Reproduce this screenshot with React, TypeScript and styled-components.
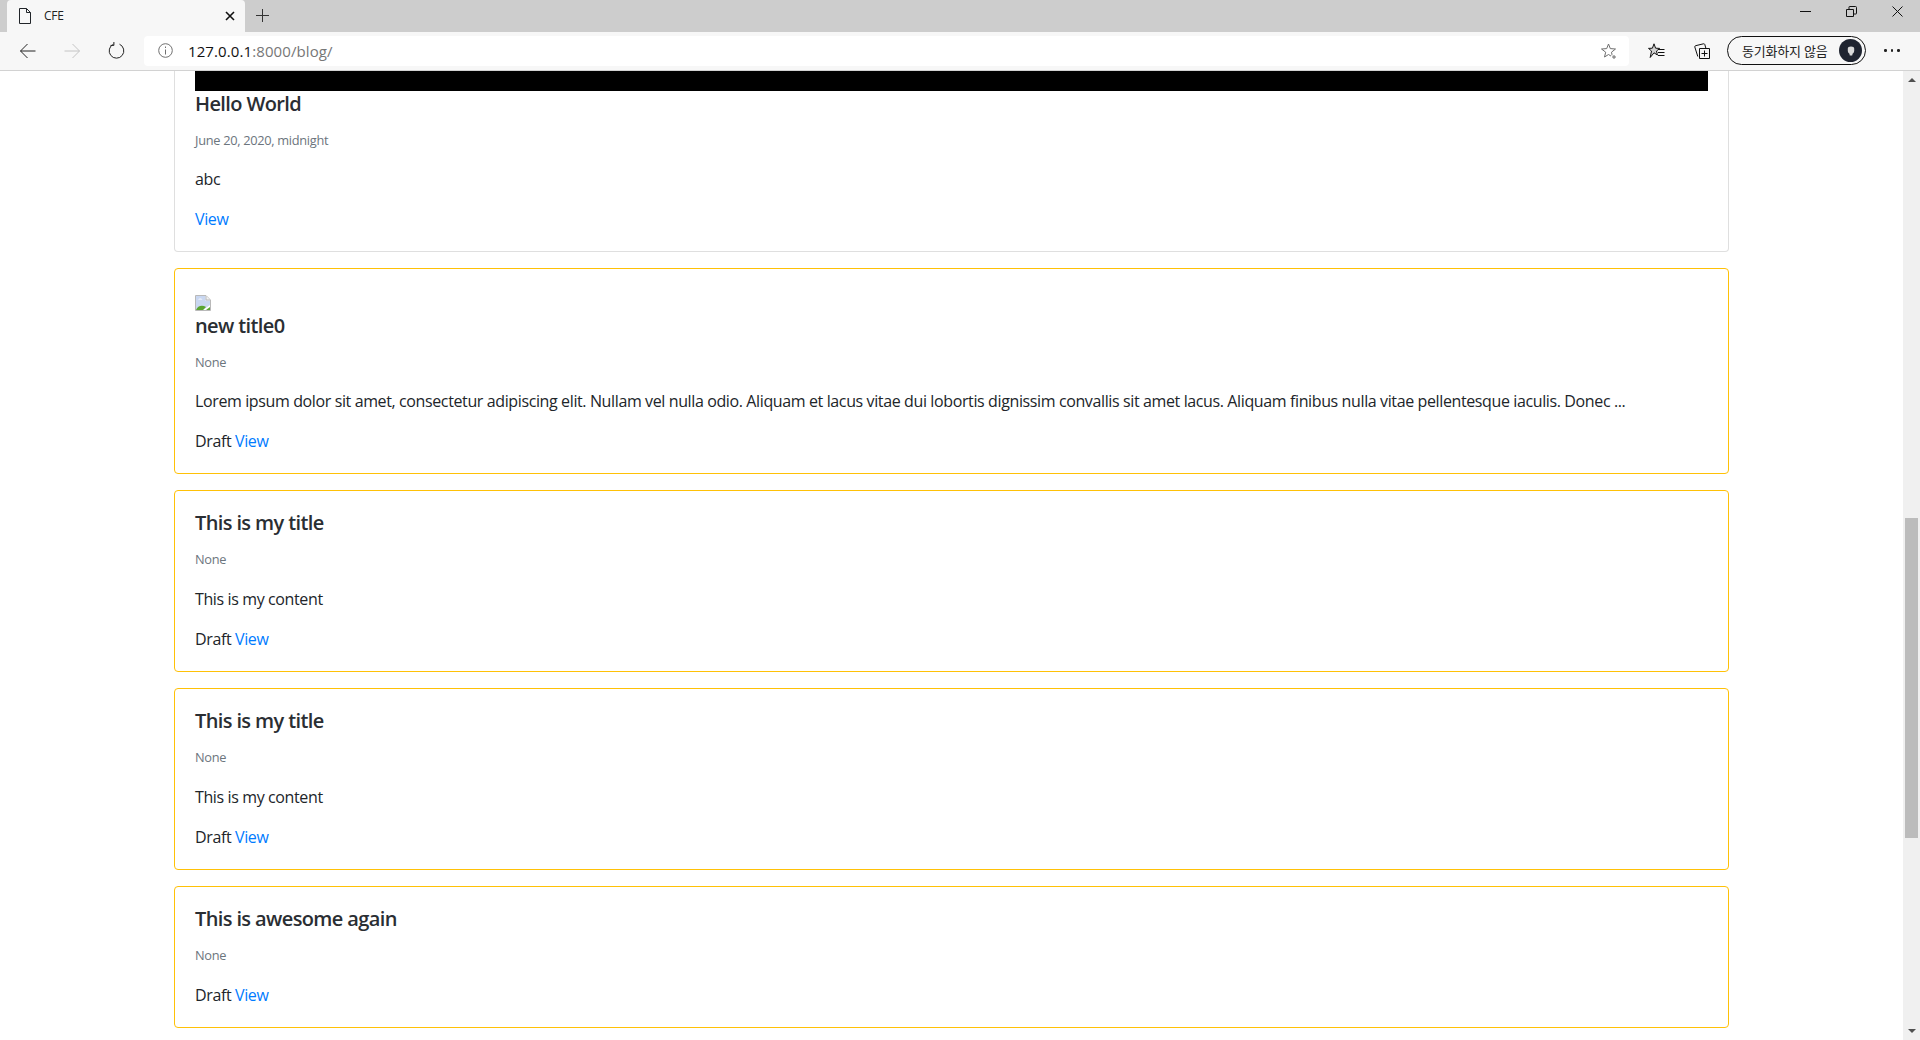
import React from 'react';
import styled, { createGlobalStyle } from 'styled-components';

const GlobalStyle = createGlobalStyle`
    html, body {
        margin: 0;
        height: 100%;
        overflow: hidden;
        background: #fff;
    }
    * {
        box-sizing: border-box;
    }
`;

const uiFont = `"Open Sans", "Noto Sans CJK KR", sans-serif`;

const posts = [
    { title: 'new title0', date: 'None', body: 'Lorem ipsum dolor sit amet, consectetur adipiscing elit. Nullam vel nulla odio. Aliquam et lacus vitae dui lobortis dignissim convallis sit amet lacus. Aliquam finibus nulla vitae pellentesque iaculis. Donec ...', broken: true },
    { title: 'This is my title', date: 'None', body: 'This is my content' },
    { title: 'This is my title', date: 'None', body: 'This is my content' },
    { title: 'This is awesome again', date: 'None' },
];

const Stroke: React.FC<{ w?: number; h?: number; children: React.ReactNode }> = ({ w = 16, h = 16, children }) => (
    <svg width={w} height={h} viewBox={`0 0 ${w} ${h}`} fill="none" stroke="currentColor" strokeWidth="1">
        {children}
    </svg>
);

const BrokenImage = () => (
    <svg width="16" height="16" viewBox="0 0 16 16">
        <path d="M0.5 0.5H11L15.5 5V15.5H0.5Z" fill="#fff" stroke="#b9b9b9" />
        <path d="M1 1H10.5V5.5H15V10L8 15H1Z" fill="#c9d7f1" />
        <path d="M1 15C2.5 10.5 7.5 9.5 11 12L8 15Z" fill="#5aa532" />
        <path d="M11 15L15 12V15Z" fill="#5aa532" />
        <path d="M3 4.5C4 3 6.5 3 7.5 4.5Z" fill="#fff" />
        <path d="M11 1V5H15" fill="#f2f2f2" stroke="#b9b9b9" />
    </svg>
);

const App: React.FC = () => {
    return (
        <Screen>
            <GlobalStyle />
            <TabStrip>
                <Tab>
                    <Stroke>
                        <path d="M1.5 .5H8.5L12.5 4.5V15.5H1.5Z" />
                        <path d="M8.5 .5V4.5H12.5" />
                    </Stroke>
                    <TabTitle>CFE</TabTitle>
                    <TabClose>
                        <Stroke w={10} h={10}>
                            <path d="M1 1L9 9M9 1L1 9" strokeWidth="1.6" />
                        </Stroke>
                    </TabClose>
                </Tab>
                <NewTab>
                    <Stroke w={13} h={13}>
                        <path d="M6.5 0V13M0 6.5H13" />
                    </Stroke>
                </NewTab>
                <WindowControls>
                    <WindowButton>
                        <Stroke w={11} h={11}><path d="M0 5.5H11" /></Stroke>
                    </WindowButton>
                    <WindowButton>
                        <Stroke w={11} h={11}>
                            <path d="M.5 3.5H7.5V10.5H.5Z" />
                            <path d="M3 3V1Q3 .5 3.5 .5H9.5Q10.5 .5 10.5 1.5V7.5Q10.5 8 10 8H8" />
                        </Stroke>
                    </WindowButton>
                    <WindowButton>
                        <Stroke w={11} h={11}><path d="M.5 .5L10.5 10.5M10.5 .5L.5 10.5" /></Stroke>
                    </WindowButton>
                </WindowControls>
            </TabStrip>
            <Toolbar>
                <NavButton>
                    <Stroke w={16} h={16}><path d="M0.5 8H15.5M7.5 1L0.5 8L7.5 15" /></Stroke>
                </NavButton>
                <NavButton $disabled>
                    <Stroke w={16} h={16}><path d="M0.5 8H15.5M8.5 1L15.5 8L8.5 15" /></Stroke>
                </NavButton>
                <NavButton>
                    <Stroke w={17} h={17}>
                        <path d="M5.5 2.2A7.3 7.3 0 1 0 11.5 2.2" />
                        <path d="M5.9 0V3.4H2.5" />
                    </Stroke>
                </NavButton>
                <AddressBar>
                    <InfoIcon>
                        <Stroke w={15} h={15}>
                            <circle cx="7.5" cy="7.5" r="6.8" />
                            <path d="M7.5 6.5V11.5M7.5 3.5V5" />
                        </Stroke>
                    </InfoIcon>
                    <Url>127.0.0.1<UrlRest>:8000/blog/</UrlRest></Url>
                    <StarIcon>
                        <Stroke w={16} h={16}>
                            <path d="M7.5 1L9.3 5.6L14.5 6L10.5 9.2L11.5 14L7.5 11.5L3.5 14L4.7 9.2L0.5 6L5.7 5.6Z" />
                            <path d="M10 14H16M13 11.5V16" stroke="#fff" strokeWidth="3" />
                            <path d="M11 14H15M13 12V16" />
                        </Stroke>
                    </StarIcon>
                </AddressBar>
                <ToolIcon>
                    <Stroke w={17} h={16}>
                        <path d="M6 .8L7.6 5.2L11.6 5.4L8.5 8L9.4 12L6 9.8L2.2 14.5L3.5 8L.5 5.4L4.4 5.2Z" fill="#000" fillOpacity=".15" />
                        <path d="M10 6.5H16.5M10 9.5H16.5M10 12.5H16.5" />
                    </Stroke>
                </ToolIcon>
                <ToolIcon>
                    <Stroke w={16} h={16}>
                        <path d="M5.5 5.5H15.5V15.5H5.5Z" />
                        <path d="M10.5 7.5V13.5M7.5 10.5H13.5" />
                        <path d="M3.8 13.5L.8 4Q.6 3 1.6 2.7L9.5 .8Q10.5 .6 10.8 1.5L11.8 5" />
                    </Stroke>
                </ToolIcon>
                <ProfilePill>
                    <ProfileLabel>동기화하지 않음</ProfileLabel>
                    <Avatar>
                        <svg width="8" height="10" viewBox="0 0 10 12">
                            <path d="M1 3Q1 .5 5 .5T9 3V6Q9 8 7 9.5L6.5 11.5H3.5L3 9.5Q1 8 1 6Z" fill="#d9d9d9" />
                        </svg>
                    </Avatar>
                </ProfilePill>
                <MoreDots>
                    <Dot />
                    <Dot />
                    <Dot />
                </MoreDots>
            </Toolbar>
            <Viewport>
                <Page>
                    <Card $clipped>
                        <BlackImage />
                        <CardTitle>Hello World</CardTitle>
                        <Muted $tight>June 20, 2020, midnight</Muted>
                        <CardText>abc</CardText>
                        <CardLine><ViewLink href="#">View</ViewLink></CardLine>
                    </Card>
                    {posts.map((post, i) => (
                        <Card key={i} $draft>
                            {post.broken && <ImageRow><BrokenImage /></ImageRow>}
                            <CardTitle>{post.title}</CardTitle>
                            <Muted $tight={post.broken}>{post.date}</Muted>
                            {post.body && <CardText>{post.body}</CardText>}
                            <CardLine>Draft <ViewLink href="#">View</ViewLink></CardLine>
                        </Card>
                    ))}
                </Page>
                <ScrollTrack>
                    <ArrowUp />
                    <ScrollThumb />
                    <ArrowDown />
                </ScrollTrack>
            </Viewport>
        </Screen>
    );
};

export default App;

const Screen = styled.div`
    display: flex;
    flex-direction: column;
    width: 1920px;
    height: 1040px;
    overflow: hidden;
    font-family: ${uiFont};
    color: #212529;
`;
const TabStrip = styled.div`
    display: flex;
    align-items: flex-start;
    flex: 0 0 32px;
    padding-left: 7px;
    background: #cdcdcd;
`;
const Tab = styled.div`
    display: flex;
    align-items: center;
    width: 238px;
    height: 32px;
    padding: 0 10px 0 11px;
    background: #f7f7f7;
    border-radius: 4px 4px 0 0;
`;
const TabTitle = styled.span`
    flex: 1;
    margin-left: 10px;
    margin-bottom: 1px;
    font-size: 12px;
    letter-spacing: -0.3px;
    color: #222;
`;
const TabClose = styled.span`
    display: flex;
    color: #111;
`;
const NewTab = styled.span`
    display: flex;
    margin: 9px 0 0 11px;
    color: #333;
`;
const WindowControls = styled.div`
    display: flex;
    margin-left: auto;
`;
const WindowButton = styled.span`
    display: flex;
    align-items: center;
    justify-content: center;
    width: 46px;
    height: 23px;
    color: #111;
`;
const Toolbar = styled.div`
    display: flex;
    align-items: center;
    flex: 0 0 39px;
    padding: 0 0 1px 6px;
    background: #f7f7f7;
    border-bottom: 1px solid #d2d2d2;
`;
const NavButton = styled.span<{ $disabled?: boolean }>`
    display: flex;
    align-items: center;
    justify-content: center;
    flex: 0 0 44px;
    color: ${({ $disabled }) => ($disabled ? '#c4c4c4' : '#222')};
`;
const AddressBar = styled.div`
    display: flex;
    align-items: center;
    flex: 0 0 1485px;
    height: 30px;
    margin: 0 5px 0 6px;
    padding: 0 12px 0 14px;
    background: #fff;
    border-radius: 4px;
`;
const InfoIcon = styled.span`
    display: flex;
    color: #707070;
`;
const Url = styled.span`
    flex: 1;
    margin-left: 15px;
    font-size: 15px;
    letter-spacing: 0.1px;
    color: #111;
`;
const UrlRest = styled.span`
    color: #777;
`;
const StarIcon = styled.span`
    display: flex;
    color: #6e6e6e;
`;
const ToolIcon = styled.span`
    display: flex;
    justify-content: center;
    flex: 0 0 45px;
    color: #111;
`;
const ProfilePill = styled.div`
    display: flex;
    align-items: center;
    justify-content: space-between;
    flex: 0 0 139px;
    height: 29px;
    margin-left: 3px;
    padding: 0 3px 0 14px;
    border: 1.5px solid #111;
    border-radius: 15px;
`;
const ProfileLabel = styled.span`
    font-size: 13px;
    letter-spacing: -0.2px;
    color: #222;
`;
const Avatar = styled.span`
    display: flex;
    align-items: center;
    justify-content: center;
    width: 23px;
    height: 23px;
    border-radius: 50%;
    background: #1f2430;
`;
const MoreDots = styled.span`
    display: flex;
    justify-content: center;
    gap: 4px;
    flex: 0 0 52px;
`;
const Dot = styled.span`
    width: 2.5px;
    height: 2.5px;
    border-radius: 50%;
    background: #222;
`;
const Viewport = styled.div`
    display: flex;
    flex: 1;
    min-height: 0;
    overflow: hidden;
`;
const Page = styled.main`
    flex: 1;
    display: flex;
    flex-direction: column;
    gap: 16px;
    padding: 0 174px;
`;
const Card = styled.section<{ $draft?: boolean; $clipped?: boolean }>`
    flex: none;
    padding: ${({ $clipped }) => ($clipped ? '0' : '20px')} 20px 20px;
    background: #fff;
    border: 1px solid ${({ $draft }) => ($draft ? '#ffc107' : 'rgba(0, 0, 0, 0.125)')};
    border-top-width: ${({ $clipped }) => ($clipped ? '0' : '1px')};
    border-radius: ${({ $clipped }) => ($clipped ? '0 0 4px 4px' : '4px')};
    font-size: 16px;
    line-height: 24px;
    letter-spacing: -0.38px;
`;
const BlackImage = styled.div`
    height: 20px;
    margin-bottom: 1px;
    background: #000;
`;
const ImageRow = styled.div`
    display: flex;
    height: 25px;
    padding-top: 6px;
`;
const CardTitle = styled.h5`
    margin: 0 0 12px;
    font-size: 20px;
    font-weight: 600;
    line-height: 24px;
    letter-spacing: -0.62px;
    color: #2a2e33;
`;
const Muted = styled.p<{ $tight?: boolean }>`
    margin: 0 0 ${({ $tight }) => ($tight ? '15px' : '16px')};
    font-size: 12.8px;
    letter-spacing: -0.3px;
    color: #6c757d;
`;
const CardText = styled.p`
    margin: 0 0 16px;
`;
const CardLine = styled.div`
    color: #212529;
`;
const ViewLink = styled.a`
    color: #007bff;
    text-decoration: none;
`;
const ScrollTrack = styled.div`
    display: flex;
    flex-direction: column;
    align-items: center;
    flex: 0 0 17px;
    background: #f0f0f0;
`;
const ArrowUp = styled.span`
    margin-top: 7px;
    border: 4px solid transparent;
    border-top: 0;
    border-bottom: 4px solid #505050;
`;
const ScrollThumb = styled.span`
    width: 13px;
    height: 320px;
    margin-top: 436px;
    background: #bcbcbc;
`;
const ArrowDown = styled.span`
    margin-top: auto;
    margin-bottom: 7px;
    border: 4px solid transparent;
    border-bottom: 0;
    border-top: 4px solid #505050;
`;
